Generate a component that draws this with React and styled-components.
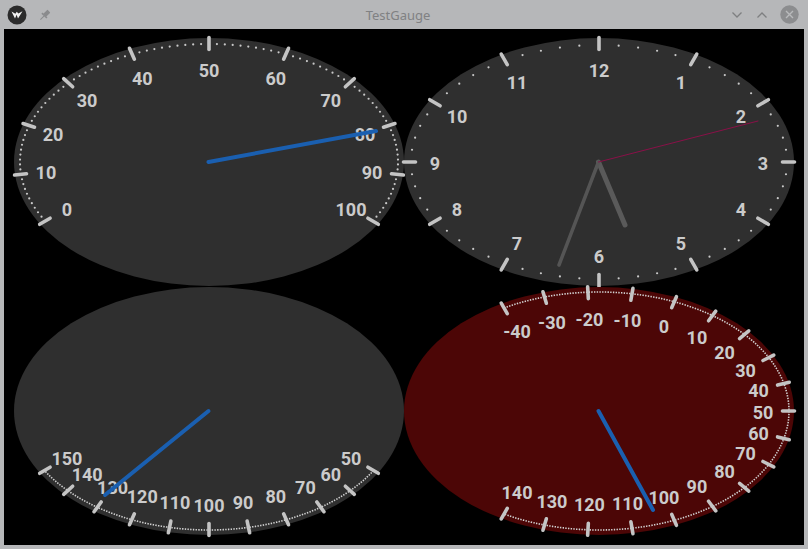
import React from "react";
import styled, { createGlobalStyle } from "styled-components";

const GlobalStyle = createGlobalStyle`
  html, body {
    margin: 0;
    padding: 0;
    background: #b6b7b9;
  }
`;

const RX = 195;
const RY = 124;
const CX = 195;
const CY = 124;

const rad = (deg) => (deg * Math.PI) / 180;

// point on the ellipse, pulled `inset` px toward the centre
const onRing = (deg, inset) => [
  CX + (RX - inset) * Math.cos(rad(deg)),
  CY - (RY - inset) * Math.sin(rad(deg)),
];

const range = (from, to, step) => {
  const out = [];
  for (let v = from; v <= to + 1e-9; v += step) out.push(Math.round(v * 100) / 100);
  return out;
};

const gauges = [
  {
    face: "#2f2f2f",
    majors: range(0, 100, 10).map((v) => 210 - 2.4 * v),
    dots: range(0, 100, 1).map((v) => 210 - 2.4 * v),
    labels: range(0, 100, 10).map((v) => ({ text: v, deg: 210 - 2.4 * v })),
    needles: [{ x: 362, y: 93, color: "#1a5fb0", width: 4 }],
  },
  {
    face: "#2f2f2f",
    majors: range(0, 11, 1).map((h) => 90 - 30 * h),
    dots: range(0, 59, 1).map((m) => 90 - 6 * m),
    dotInset: 7,
    labels: range(1, 12, 1).map((h) => ({ text: h, deg: 90 - 30 * h })),
    needles: [
      { x: 221, y: 187, color: "#5a5a5a", width: 5 },
      { x: 155, y: 227, color: "#555555", width: 3.5 },
      { x: 354, y: 83, color: "#8a1048", width: 1 },
    ],
  },
  {
    face: "#2f2f2f",
    majors: range(50, 150, 10).map((v) => 270 + (100 - v) * 1.2),
    arc: [210, 330],
    labels: range(50, 150, 10).map((v) => ({ text: v, deg: 270 + (100 - v) * 1.2 })),
    needles: [{ x: 91, y: 208, color: "#1a5fb0", width: 4 }],
  },
  {
    face: "#4c0606",
    majors: range(-40, 140, 10).map((v) => ((50 - v) * 4) / 3),
    arc: [-120, 120],
    labels: range(-40, 140, 10).map((v) => ({ text: v, deg: ((50 - v) * 4) / 3 })),
    needles: [{ x: 249, y: 223, color: "#1a5fb0", width: 4 }],
  },
];

const Gauge = ({ face, majors, dots, dotInset = 6, arc, labels, needles }) => {
  let arcPoints = null;
  if (arc) {
    const pts = [];
    for (let d = arc[1]; d >= arc[0]; d -= 0.25) pts.push(onRing(d, 5).map((n) => n.toFixed(2)).join(","));
    arcPoints = pts.join(" ");
  }
  return (
    <GaugeSvg width="390" height="248" viewBox="0 0 390 248">
      <ellipse cx={CX} cy={CY} rx={RX} ry={RY} fill={face} />
      {dots &&
        dots.map((deg, i) => {
          const [x, y] = onRing(deg, dotInset);
          return <circle key={i} cx={x} cy={y} r="1.1" fill="#c9c9c9" />;
        })}
      {arcPoints && (
        <polyline points={arcPoints} fill="none" stroke="#d2d2d2" strokeWidth="1.6" strokeDasharray="1.4 1.3" />
      )}
      {majors.map((deg, i) => {
        const [ex, ey] = onRing(deg, 0);
        const dx = Math.cos(rad(deg));
        const dy = -Math.sin(rad(deg));
        return (
          <line
            key={i}
            x1={ex + dx * 0.5}
            y1={ey + dy * 0.5}
            x2={ex - dx * 11.5}
            y2={ey - dy * 11.5}
            stroke="#c4c4c4"
            strokeWidth="3.6"
            strokeLinecap="round"
          />
        );
      })}
      {labels.map((l, i) => {
        const [x, y] = onRing(l.deg, 31);
        return (
          <Label key={i} x={x} y={y + 1}>
            {l.text}
          </Label>
        );
      })}
      {needles.map((n, i) => (
        <line
          key={i}
          x1={CX - 0.5}
          y1={CY}
          x2={n.x}
          y2={n.y}
          stroke={n.color}
          strokeWidth={n.width}
          strokeLinecap="round"
        />
      ))}
    </GaugeSvg>
  );
};

const App = () => {
  return (
    <Window>
      <GlobalStyle />
      <TitleBar>
        <Side>
          <svg width="20" height="20" viewBox="0 0 20 20">
            <circle cx="10" cy="10" r="9.5" fill="#2b2b2b" />
            <path d="M4.5 6.5 L8 13.5 L9.6 9.8 L11 13.5 L15.5 6.2 L11.3 8.6 L9.8 6.8 L8.4 8.8 Z" fill="#f2f2f2" />
          </svg>
          <svg width="14" height="14" viewBox="0 0 14 14">
            <g transform="rotate(45 7 7)" fill="#8a8b8d">
              <rect x="5" y="1.5" width="4" height="6" rx="0.5" />
              <rect x="3.5" y="7" width="7" height="1.6" />
              <rect x="6.5" y="8.5" width="1" height="5" />
            </g>
          </svg>
        </Side>
        <Title>TestGauge</Title>
        <Controls>
          <svg width="14" height="14" viewBox="0 0 14 14">
            <path d="M2.5 4.5 L7 9 L11.5 4.5" fill="none" stroke="#7e7f81" strokeWidth="1.3" />
          </svg>
          <svg width="14" height="14" viewBox="0 0 14 14">
            <path d="M2.5 9.5 L7 5 L11.5 9.5" fill="none" stroke="#7e7f81" strokeWidth="1.3" />
          </svg>
          <svg width="19" height="19" viewBox="0 0 19 19">
            <circle cx="9.5" cy="9.5" r="9.2" fill="#8c8d8f" />
            <path d="M6 6 L13 13 M13 6 L6 13" stroke="#b9babc" strokeWidth="1.4" />
          </svg>
        </Controls>
      </TitleBar>
      <Content>
        {gauges.map((g, i) => (
          <Gauge key={i} {...g} />
        ))}
      </Content>
    </Window>
  );
};

export default App;

const Window = styled.div`
  width: 808px;
  height: 549px;
  box-sizing: border-box;
  padding: 0 4px 4px 4px;
  background: #b6b7b9;
  display: flex;
  flex-direction: column;
  overflow: hidden;
`;

const TitleBar = styled.div`
  height: 29px;
  display: grid;
  grid-template-columns: 1fr auto 1fr;
  align-items: center;
  margin: 0 -4px;
  padding: 0 9px 0 7px;
`;

const Side = styled.div`
  display: flex;
  align-items: center;
  gap: 11px;
`;

const Title = styled.div`
  font-family: "Noto Sans", sans-serif;
  font-size: 13px;
  color: #808183;
  margin-left: -10px;
`;

const Controls = styled.div`
  display: flex;
  align-items: center;
  justify-content: flex-end;
  gap: 11px;
`;

const Content = styled.div`
  flex: 1;
  background: #000;
  display: grid;
  grid-template-columns: 390px 390px;
  grid-template-rows: 248px 248px;
  row-gap: 1px;
  padding: 9px 10px 0 10px;
`;

const GaugeSvg = styled.svg`
  display: block;
  overflow: visible;
`;

const Label = styled.text`
  font-family: Roboto, "Liberation Sans", sans-serif;
  font-weight: 700;
  font-size: 18px;
  fill: #cbcbcb;
  text-anchor: middle;
  dominant-baseline: central;
`;
